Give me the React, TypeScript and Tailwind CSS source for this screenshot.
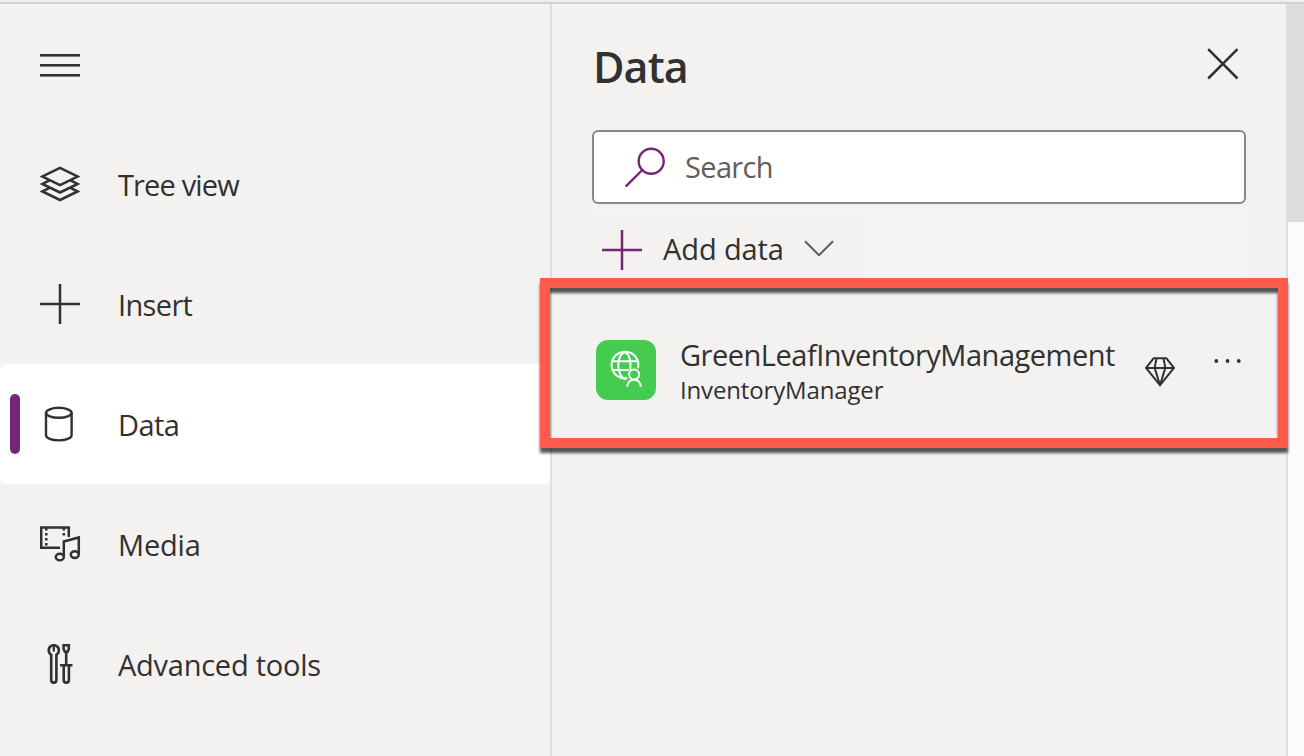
import type { ReactNode } from "react";

const MenuIcon = () => (
  <svg width="40" height="24" viewBox="0 0 40 24" fill="#323130">
    <rect x="0" y="0" width="40" height="2.6" />
    <rect x="0" y="10" width="40" height="2.6" />
    <rect x="0" y="20" width="40" height="2.6" />
  </svg>
);

const LayersIcon = () => (
  <svg width="40" height="40" viewBox="0 0 40 40" fill="none" stroke="#323130" strokeWidth="2.5">
    <path d="M20 3.9 37.6 12.5 20 21.1 2.4 12.5Z" />
    <path d="M9.5 16.3 2.4 20 20 28.5 37.6 20 30.5 16.3" />
    <path d="M9.5 23.8 2.4 27.5 20 36 37.6 27.5 30.5 23.8" />
  </svg>
);

const PlusIcon = ({ color }: { color: string }) => (
  <svg width="40" height="40" viewBox="0 0 40 40" fill={color}>
    <rect x="18.75" y="0" width="2.5" height="40" />
    <rect x="0" y="18.75" width="40" height="2.5" />
  </svg>
);

const DatabaseIcon = () => (
  <svg width="40" height="40" viewBox="0 0 40 40" fill="none" stroke="#323130" strokeWidth="2.4">
    <ellipse cx="18.8" cy="8.8" rx="12.8" ry="5" />
    <path d="M6 8.8V31.2C6 34 11.7 36.4 18.8 36.4S31.6 34 31.6 31.2V8.8" />
  </svg>
);

const MediaIcon = () => (
  <svg width="42" height="40" viewBox="0 0 42 40" fill="none" stroke="#323130" strokeWidth="2.5">
    <path d="M20 23.8H1.2V3.4H28.8V13" />
    <path d="M6.3 4v18" strokeDasharray="2.5 2.5" />
    <path d="M23.8 4v8" strokeDasharray="2.5 2.5" />
    <path d="M23.8 32.8V17.5L38.8 13.5V30.5" />
    <ellipse cx="19.8" cy="33" rx="4" ry="3.3" />
    <ellipse cx="34.8" cy="30.6" rx="4" ry="3.3" />
  </svg>
);

const ToolsIcon = () => (
  <svg width="40" height="40" viewBox="0 0 40 40" fill="none" stroke="#323130" strokeWidth="2.6">
    <path d="M11.2 1.9A5.2 5.2 0 0 0 8.7 6.3C8.7 8.5 9.9 10 11.2 10.8V36A2.6 2.6 0 0 0 16.4 36V10.8C17.7 10 18.9 8.5 18.9 6.3A5.2 5.2 0 0 0 16.4 1.9" />
    <path d="M11.2 1.9C12.4 1.3 15.2 1.3 16.4 1.9" />
    <path d="M13.8 2v5.6" strokeWidth="2.2" />
    <path d="M23.6 1.3H28.8V5L27.6 7.7H24.8L23.6 5Z" />
    <path d="M26.2 8v13M20 21.2H32.5M23.7 21.2V36A2.6 2.6 0 0 0 28.9 36V21.2" />
  </svg>
);

const SearchIcon = () => (
  <svg width="40" height="40" viewBox="0 0 40 40" fill="none" stroke="#742774" strokeWidth="2.4" strokeLinecap="round">
    <circle cx="26.2" cy="14.2" r="12.5" />
    <path d="M17.3 23 1.4 38.8" />
  </svg>
);

const CloseIcon = () => (
  <svg width="32" height="32" viewBox="0 0 32 32" stroke="#323130" strokeWidth="2.5">
    <path d="M1.2 1.2 30.5 30.5M30.5 1.2 1.2 30.5" />
  </svg>
);

const ChevronIcon = () => (
  <svg width="30" height="18" viewBox="0 0 30 18" fill="none" stroke="#605e5c" strokeWidth="2">
    <path d="M1 2.2 15 16.2 29 2.2" />
  </svg>
);

const GlobeUserIcon = () => (
  <svg width="60" height="60" viewBox="0 0 60 60" fill="none" stroke="#fff" strokeWidth="2">
    <path d="M31.3 38.3A13.4 13.4 0 1 1 42 28.3" />
    <path d="M30.4 38.5C26 39.5 22.3 33 22.3 25.6S25.3 12.5 28.6 12.5 34.5 18 34.5 25.6c0 1.6-.1 3-.3 4.2" />
    <path d="M16.5 21.2H40.8M16.5 30H33" />
    <circle cx="38.1" cy="34.5" r="5" />
    <path d="M31.2 46.8C31.5 42.5 34.4 39.7 38.1 39.7s6.5 2.8 6.8 7.1" />
  </svg>
);

const DiamondIcon = () => (
  <svg width="30" height="30" viewBox="0 0 30 30" fill="none" stroke="#323130" strokeWidth="2" strokeLinejoin="round">
    <path d="M8.6 1.3H21.4L29 10.9 15 28.2 1 10.9Z" />
    <path d="M1 10.9H29M11.5 1.3 9.7 10.9 15 28.2 20.3 10.9 18.5 1.3" />
  </svg>
);

const MoreIcon = () => (
  <svg width="28" height="6" viewBox="0 0 28 6" fill="#323130">
    <circle cx="2.3" cy="3" r="1.9" />
    <circle cx="13.5" cy="3" r="1.9" />
    <circle cx="24.8" cy="3" r="1.9" />
  </svg>
);

type NavItem = { label: string; icon: ReactNode; tracking: string; selected?: boolean };

const navItems: NavItem[] = [
  { label: "Tree view", icon: <LayersIcon />, tracking: "tracking-[-0.85px]" },
  { label: "Insert", icon: <PlusIcon color="#323130" />, tracking: "tracking-[-0.65px]" },
  { label: "Data", icon: <DatabaseIcon />, tracking: "tracking-[-0.55px]", selected: true },
  { label: "Media", icon: <MediaIcon />, tracking: "tracking-[-0.2px]" },
  { label: "Advanced tools", icon: <ToolsIcon />, tracking: "tracking-[-0.25px]" },
];

function Sidebar() {
  return (
    <nav className="flex w-[552px] shrink-0 flex-col border-r-2 border-[#e1dfdd]">
      <button className="flex h-[120px] items-center pl-10 pb-px pt-1">
        <MenuIcon />
      </button>
      {navItems.map((item) => (
        <a
          key={item.label}
          className={
            item.selected
              ? "flex h-[120px] items-center rounded-md bg-white pl-[10px]"
              : "flex h-[120px] items-center pl-[10px]"
          }
        >
          <span className={item.selected ? "h-[60px] w-[10px] rounded-full bg-[#742774]" : "h-[60px] w-[10px]"} />
          <span className="ml-5 flex w-[78px] shrink-0">{item.icon}</span>
          <span className={`pt-0.5 text-[29px] leading-10 ${item.tracking}`}>{item.label}</span>
        </a>
      ))}
    </nav>
  );
}

function DataPanel() {
  return (
    <section className="flex w-[736px] shrink-0 flex-col border-r-2 border-[#e1dfdd] pl-10">
      <header className="flex h-[126px] items-center justify-between pr-[47px]">
        <h1 className="pl-px text-[43px] font-semibold leading-[60px] tracking-[-0.9px]">Data</h1>
        <button className="mb-1.5">
          <CloseIcon />
        </button>
      </header>
      <div className="flex h-[74px] w-[654px] items-center rounded-md border-2 border-[#8a8886] bg-white pl-[31px]">
        <SearchIcon />
        <span className="ml-5 text-[29px] leading-10 tracking-[-0.65px] text-[#605e5c]">Search</span>
      </div>
      <div className="mt-[6px] flex h-[68px] w-[654px] bg-[#f3f3f3] pt-1">
        <button className="flex h-16 w-[272px] items-center bg-[#f3f2f1] pl-[10px] pt-2">
          <PlusIcon color="#742774" />
          <span className="-mt-0.5 ml-[21px] text-[29px] leading-10 tracking-[-0.1px]">Add data</span>
          <span className="-mt-1 ml-5">
            <ChevronIcon />
          </span>
        </button>
      </div>
      <div className="relative flex h-[170px] items-center pl-1 pt-[14px]">
        <div className="pointer-events-none absolute -left-[52px] top-0 h-[170px] w-[748px] border-[10px] border-[#ff5a4a] drop-shadow-[0_5px_1.5px_rgba(0,0,0,0.66)]" />
        <span className="shrink-0 rounded-[12px] bg-[#45cb50]">
          <GlobeUserIcon />
        </span>
        <div className="ml-6 flex w-[465px] flex-col pt-1">
          <span className="text-[29px] leading-9 tracking-[-0.49px]">GreenLeafInventoryManagement</span>
          <span className="text-[24px] leading-[34px] tracking-[-0.15px]">InventoryManager</span>
        </div>
        <span className="mt-[3px]">
          <DiamondIcon />
        </span>
        <span className="mb-[18px] ml-[39px]">
          <MoreIcon />
        </span>
      </div>
    </section>
  );
}

export default function App() {
  return (
    <div className="flex h-[756px] w-[1304px] flex-col overflow-hidden bg-[#f3f2f1] font-['Open_Sans','Noto_Sans',sans-serif] text-[#323130]">
      <div className="h-1 shrink-0 border-b-2 border-[#d2d2d2] bg-[#f0f0f0]" />
      <main className="flex min-h-0 flex-1">
        <Sidebar />
        <DataPanel />
        <div className="flex-1 bg-[#fbfbfb]">
          <div className="h-[218px] bg-[#dcdcdc]" />
        </div>
      </main>
    </div>
  );
}
